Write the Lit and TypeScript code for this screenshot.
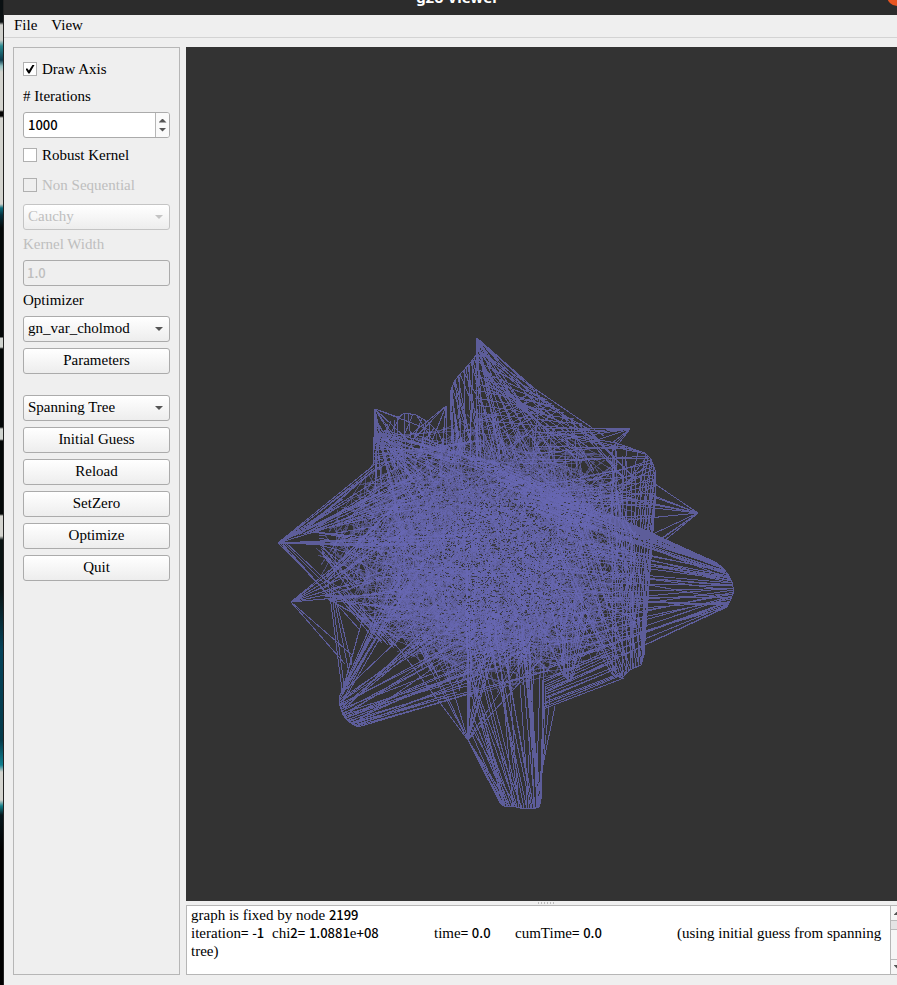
import { LitElement, html, css, svg } from "lit";
import { customElement } from "lit/decorators.js";

type Point = [number, number];

/** Small seeded generator, so the pose graph looks the same on every load. */
function createRandom(seed: number): () => number {
  let s = seed;
  return () => {
    s = (s + 0x6d2b79f5) | 0;
    let t = Math.imul(s ^ (s >>> 15), 1 | s);
    t = (t + Math.imul(t ^ (t >>> 7), 61 | t)) ^ t;
    return ((t ^ (t >>> 14)) >>> 0) / 4294967296;
  };
}

const rand = createRandom(2199);

/** Point at fraction t (0..1) along a polyline. */
function along(line: Point[], t: number): Point {
  if (line.length === 1) return line[0];
  const f = Math.min(t, 0.9999) * (line.length - 1);
  const i = Math.floor(f);
  const k = f - i;
  return [
    line[i][0] + (line[i + 1][0] - line[i][0]) * k,
    line[i][1] + (line[i + 1][1] - line[i][1]) * k,
  ];
}

function inside([x, y]: Point, poly: Point[]): boolean {
  let hit = false;
  for (let i = 0, j = poly.length - 1; i < poly.length; j = i++) {
    const [xi, yi] = poly[i];
    const [xj, yj] = poly[j];
    if (yi > y !== yj > y && x < ((xj - xi) * (y - yi)) / (yj - yi) + xi) hit = !hit;
  }
  return hit;
}

const segment = (a: Point, b: Point): string =>
  `M${Math.round(a[0])} ${Math.round(a[1])}L${Math.round(b[0])} ${Math.round(b[1])}`;

/** Edges running in order from one polyline to another, with some jitter. */
function fan(from: Point[], to: Point[], count: number, jitter = 0.12): string {
  let d = "";
  for (let i = 0; i < count; i++) {
    const t = count === 1 ? 0 : i / (count - 1);
    const edge = i === 0 || i === count - 1;
    const u = edge ? t : Math.max(0, Math.min(1, t + (rand() - 0.5) * jitter * 2));
    d += segment(along(from, t), along(to, u));
  }
  return d;
}

const outline = (line: Point[]): string => "M" + line.map((p) => p.join(" ")).join("L");

const CORE: Point[] = [
  [374, 434], [410, 432], [446, 430], [456, 410], [478, 400], [510, 408], [545, 424], [590, 440], [622, 456],
  [640, 490], [640, 545], [645, 600], [642, 650], [606, 662], [570, 672], [545, 678], [506, 694],
  [470, 698], [436, 676], [400, 660], [374, 634], [340, 604], [318, 580], [314, 545], [340, 505], [374, 468],
];

function chords(count: number, reach: number, cx: number, cy: number, rx: number, ry: number): string {
  let d = "";
  for (let n = 0; n < count; ) {
    const a: Point = [cx + (rand() * 2 - 1) * rx, cy + (rand() * 2 - 1) * ry];
    const angle = rand() * Math.PI * 2;
    const length = reach * (0.4 + rand() * 0.6);
    const b: Point = [a[0] + Math.cos(angle) * length, a[1] + Math.sin(angle) * length];
    if (!inside(a, CORE) || !inside(b, CORE)) continue;
    d += segment(a, b);
    n++;
  }
  return d;
}

const LOBE_TOP: Point[] = [[450, 400], [451, 390], [455, 380], [463, 371], [471, 362], [476, 355]];
const LOBE_RIGHT: Point[] = [[715, 562], [722, 567], [728, 574], [732, 582], [734, 591], [730, 601], [727, 607]];
const LOBE_NE: Point[] = [[616, 443], [645, 453], [651, 459], [655, 470], [656, 490], [652, 525]];
const LOBE_SE: Point[] = [[612, 674], [622, 678], [630, 670], [641, 665], [644, 655]];
const LOBE_SOUTH: Point[] = [[500, 803], [504, 806], [512, 806], [520, 808], [532, 809], [539, 807], [541, 799]];
const LOBE_SW: Point[] = [[343, 690], [339, 697], [340, 706], [343, 715], [349, 722], [358, 727]];
const LOBE_NW: Point[] = [[388, 424], [396, 417], [405, 413], [416, 415], [428, 422], [438, 432]];

const EDGES = [
  // northern spike
  fan([[477, 338]], [[476, 470], [500, 460], [520, 440], [540, 430]], 12),
  fan([[477, 338]], [[535, 391], [538, 402], [545, 415]], 3),
  fan([[478, 350]], [[560, 450], [590, 440], [604, 436]], 4),
  fan(LOBE_TOP, [[455, 470], [470, 440], [476, 450], [500, 460], [540, 450]], 16, 0.25),
  fan(LOBE_TOP, [[452, 440], [460, 460], [466, 450], [478, 460]], 9, 0.1),
  fan([[477, 345], [482, 370], [490, 390]], [[520, 470], [550, 450], [580, 460], [600, 440]], 11, 0.3),
  fan([[474, 360], [476, 420]], [[535, 391], [560, 410], [590, 430]], 9),
  fan([[535, 391], [548, 401], [565, 416], [587, 428]], [[480, 420], [510, 450], [590, 470], [636, 480]], 16, 0.3),
  outline([[477, 338], [535, 389], [539, 397], [548, 403], [567, 417], [587, 428], [630, 429]]),
  outline(LOBE_TOP),
  // north-east spike and rounded lobe
  fan([[630, 429]], [[540, 428], [530, 436], [560, 440], [615, 443], [606, 460]], 8),
  fan(LOBE_NE, [[555, 432], [520, 457], [530, 480], [540, 510], [580, 560]], 18, 0.25),
  fan(LOBE_NE, [[608, 560], [622, 610], [635, 630], [644, 650]], 14, 0.1),
  fan([[612, 446], [656, 490]], LOBE_SE, 10, 0.08),
  fan([[648, 455], [656, 500]], [[600, 520], [540, 500]], 7),
  outline(LOBE_NE),
  fan([[698, 513]], [[655, 484], [650, 500], [570, 490], [560, 520], [600, 545], [655, 539], [664, 541]], 12),
  // eastern lobe
  fan(LOBE_RIGHT, [[410, 432], [470, 460], [540, 520], [550, 560], [560, 610], [550, 660], [548, 690]], 32, 0.06),
  fan(LOBE_RIGHT, [[540, 487], [560, 510], [600, 560], [600, 590], [620, 638]], 22, 0.2),
  fan([[715, 562], [724, 569]], [[490, 460], [500, 485]], 7),
  outline(LOBE_RIGHT),
  // south-east lobe
  fan(LOBE_SE, [[545, 560], [560, 540], [580, 500], [612, 480], [646, 560]], 18, 0.15),
  fan([[544, 680], [546, 694], [543, 709]], [[610, 650], [616, 664], [624, 678]], 13, 0.08),
  fan([[563, 675], [568, 681], [573, 676]], [[530, 600], [560, 600], [600, 610]], 12, 0.2),
  outline(LOBE_SE),
  // southern spike
  fan(LOBE_SOUTH, [[467, 738], [469, 700], [475, 640], [500, 600], [520, 620], [544, 665]], 28, 0.16),
  fan(LOBE_SOUTH, [[468, 740], [480, 690], [505, 650], [530, 660], [544, 680]], 18, 0.35),
  fan([[541, 800], [541, 775]], [[543, 680], [555, 706]], 4),
  fan([[468, 740]], [[400, 650], [430, 640], [466, 560], [472, 560], [500, 620], [540, 660]], 20),
  outline(LOBE_SOUTH),
  outline([[467, 738], [476, 755], [500, 803]]),
  // south-west lobe
  fan(LOBE_SW, [[365, 610], [390, 620], [440, 640], [470, 670], [480, 680], [435, 704]], 24, 0.12),
  fan(LOBE_SW, [[400, 570], [430, 560], [480, 600], [520, 640], [550, 670]], 20, 0.3),
  fan([[358, 727]], [[434, 704], [442, 702], [480, 690]], 3),
  outline(LOBE_SW),
  // western spikes
  fan([[278, 543]], [[374, 465], [400, 460], [430, 480], [480, 538], [420, 545], [360, 546]], 18),
  fan([[280, 543]], [[374, 468], [330, 512], [350, 500]], 5),
  fan([[278, 543], [284, 541]], [[315, 580], [360, 630], [400, 650]], 5),
  fan([[297, 535], [318, 530], [322, 554]], [[374, 470], [420, 500], [440, 570], [350, 590]], 22, 0.25),
  fan([[291, 602]], [[360, 545], [380, 555], [345, 580], [331, 598], [370, 595]], 9),
  fan([[291, 602]], [[345, 664], [352, 655]], 2),
  fan([[326, 575], [322, 595], [333, 602]], [[400, 500], [430, 560], [400, 640]], 18, 0.25),
  fan([[328, 580], [336, 600]], [[342, 690], [352, 665]], 4),
  fan([[340, 598], [345, 590]], [[375, 640], [400, 650]], 6),
  // north-west spike
  fan([[375, 409]], [[373, 465], [378, 480], [390, 470], [404, 450], [430, 430]], 9),
  fan([[374, 409], [373, 465]], [[376, 490], [420, 480], [460, 460], [480, 440]], 15, 0.25),
  fan([[376, 418], [374, 440], [384, 430]], [[400, 520], [440, 480], [480, 470], [520, 470]], 16, 0.3),
  fan(LOBE_NW, [[380, 450], [396, 470], [420, 450], [446, 450]], 14, 0.3),
  fan([[446, 406]], [[392, 450], [408, 452], [440, 460], [446, 450]], 6),
  outline([[375, 409], [398, 417], ...LOBE_NW.slice(2)]),
].join("");

/** Several layers, so that crossings build up towards the middle. */
const MESH = [
  chords(420, 210, 480, 550, 170, 150),
  chords(560, 130, 490, 560, 160, 140),
  chords(420, 90, 470, 570, 110, 100),
  chords(520, 70, 490, 560, 95, 90),
  chords(380, 50, 480, 570, 80, 75),
];

function speckles(count: number, cx: number, cy: number, rx: number, ry: number): string {
  let d = "";
  for (let i = 0; i < count; i++) {
    const angle = rand() * Math.PI * 2;
    const r = Math.sqrt(rand());
    const x = Math.round(cx + Math.cos(angle) * r * rx);
    const y = Math.round(cy + Math.sin(angle) * r * ry);
    const w = rand() > 0.7 ? 2 : 1;
    d += `M${x} ${y}h${w}v1h-${w}z`;
  }
  return d;
}

const GAPS = speckles(650, 505, 560, 66, 62) + speckles(900, 485, 560, 120, 100);

/** Figures and signs are set in the sans face, words in the serif one. */
const mixed = (text: string) =>
  text
    .split(/([0-9=+.\-]+)/)
    .map((part, i) => (i % 2 ? html`<span class="num">${part}</span>` : part));

@customElement("graph-view")
export class GraphView extends LitElement {
  static styles = css`
    :host { display: block; background: #333; overflow: hidden; }
    svg { display: block; width: 100%; height: 100%; }
    .edges { fill: none; stroke: #6868b4; stroke-opacity: 0.8; shape-rendering: crispEdges; }
    .mesh { fill: none; stroke: #6868b4; stroke-opacity: 0.55; shape-rendering: crispEdges; }
    .gaps { fill: #333; fill-opacity: 0.85; shape-rendering: crispEdges; }
  `;

  render() {
    return html`<svg viewBox="186 47 711 854" preserveAspectRatio="xMinYMid meet" role="img" aria-label="Pose graph">
      ${svg`<path class="edges" d=${EDGES}></path>
      ${MESH.map((layer) => svg`<path class="mesh" d=${layer}></path>`)}
      <path class="gaps" d=${GAPS}></path>`}
    </svg>`;
  }
}

@customElement("app-root")
export class AppRoot extends LitElement {
  static styles = css`
    * { box-sizing: border-box; }
    :host {
      display: block;
      height: 100vh;
      min-height: 640px;
      overflow: hidden;
      font: 15px/18px "Liberation Serif", serif;
      color: #000;
      background: linear-gradient(
        #0a1012 0 22px, #cfd0cc 25px 40px, #2a8a90 46px, #0b3a4c 60px, #8fc0c0 66px, #d4d4cf 72px 110px,
        #050505 112px 116px, #d4d4cf 118px 204px, #0c6c7c 208px, #05303e 215px, #040808 228px 337px,
        #d0d4d0 338px 347px, #040808 349px 427px, #d0d4d0 429px 439px, #040808 441px 514px,
        #d4d4cf 516px 536px, #0a1414 540px 590px, #04435a 650px, #043a4a 740px, #108090 765px,
        #d4d4cf 772px 800px, #12808a 806px, #06161c 815px, #000 850px
      );
    }
    .window {
      display: flex;
      flex-direction: column;
      height: 100%;
      margin: 0 -14px 0 3px;
      border-left: 1px solid #222;
      background: #efefef;
    }
    .title {
      position: relative;
      display: flex;
      flex: none;
      align-items: flex-end;
      justify-content: center;
      height: 15px;
      padding-bottom: 9px;
      background: #2c2c2c;
      color: #fff;
    }
    .title h1 { margin: 0; font: bold 15px/18px "Noto Sans", sans-serif; }
    .close {
      position: absolute;
      right: 4px;
      bottom: 9px;
      width: 20px;
      height: 20px;
      padding: 0;
      border: 0;
      border-radius: 50%;
      background: #e95420;
    }
    .menu {
      display: flex;
      flex: none;
      gap: 14px;
      height: 23px;
      padding: 0 10px;
      border-bottom: 1px solid #d3d3d3;
    }
    .menu button { padding: 0 0 2px; border: 0; background: none; font: inherit; color: inherit; }
    .body { display: flex; flex: 1; gap: 6px; min-height: 0; padding: 9px 6px 10px 9px; }
    .panel {
      display: flex;
      flex: none;
      flex-direction: column;
      gap: 6px;
      width: 167px;
      padding: 10px 9px;
      border: 1px solid #b6b6b6;
    }
    .caption { height: 18px; line-height: 16px; }
    .check { display: flex; align-items: center; gap: 5px; height: 24px; padding-bottom: 2px; }
    .check input {
      appearance: none;
      display: grid;
      place-items: center;
      width: 14px;
      height: 14px;
      margin: 0;
      border: 1px solid #b0b0b0;
      background: #fff;
    }
    .check input:checked::after {
      content: "";
      width: 9px;
      height: 9px;
      background: #000;
      clip-path: polygon(0 50%, 18% 42%, 38% 68%, 80% 0, 100% 6%, 46% 100%, 32% 100%);
    }
    .check input:disabled { background: #efefef; }
    .off { color: #bebebe; }
    .field, .push, select {
      width: 100%;
      height: 26px;
      border: 1px solid #ababab;
      border-radius: 3px;
      color: inherit;
    }
    .push, select {
      flex: none;
      margin: 0;
      background: linear-gradient(#fff, #ededed);
      font: inherit;
    }
    .push { padding: 0 0 2px; }
    select { appearance: none; padding: 0 4px 2px; opacity: 1; }
    .combo { position: relative; flex: none; height: 26px; }
    .combo::after {
      content: "";
      position: absolute;
      top: 11px;
      right: 7px;
      border: 4px solid transparent;
      border-top-color: #555;
      border-bottom: 0;
      pointer-events: none;
    }
    .combo.off::after { border-top-color: #c4c4c4; }
    .combo.off select { border-color: #c4c4c4; }
    .num, .field input { font-family: "Noto Sans CJK SC", sans-serif; font-size: 13px; font-weight: 500; line-height: 1; }
    .field { display: flex; flex: none; overflow: hidden; background: #fff; }
    .field.off { background: #efefef; }
    .field input {
      appearance: textfield;
      flex: 1;
      min-width: 0;
      padding: 0 4px 2px;
      border: 0;
      outline: 0;
      background: none;
      color: inherit;
    }
    .field input::-webkit-inner-spin-button { appearance: none; }
    .field.off input { padding: 0 3px 2px; color: #bebebe; }
    .steps { display: flex; flex-direction: column; justify-content: center; gap: 5px; width: 14px; border-left: 1px solid #b6b6b6; background: #fafafa; }
    .arrow { align-self: center; width: 8px; height: 4px; padding: 0; border: 0; background: #555; }
    .up { clip-path: polygon(50% 0, 100% 100%, 0 100%); }
    .down { clip-path: polygon(0 0, 100% 0, 50% 100%); }
    .spacer { flex: none; height: 9px; }
    .main { display: flex; flex: 1; flex-direction: column; min-width: 0; }
    graph-view { flex: 1; min-height: 0; }
    .grip { align-self: center; width: 17px; height: 4px; padding: 0; border: 0; background: radial-gradient(circle, #bbb 1px, transparent 1px) 0 0 / 3px 4px; }
    .log { display: flex; flex: none; height: 70px; border: 1px solid #b6b6b6; background: #fff; }
    .text { flex: 1; margin: 0; padding: 0 4px; font: inherit; white-space: pre-wrap; tab-size: 81px; }
    .scroll { display: flex; flex: none; flex-direction: column; align-items: center; width: 14px; border-left: 1px solid #b6b6b6; background: #f6f6f6; }
    .scroll .arrow { margin: 5px 0; }
    .thumb { width: 100%; height: 10px; border: 1px solid #bbb; border-width: 1px 0; background: #e4e4e4; }
    .track { flex: 1; width: 100%; border-bottom: 1px solid #bbb; }
  `;

  render() {
    return html`
      <div class="window">
        <header class="title">
          <h1>g2o Viewer</h1>
          <button class="close" aria-label="Close"></button>
        </header>
        <nav class="menu"><button>File</button><button>View</button></nav>
        <div class="body">
          <form class="panel" @submit=${(e: Event) => e.preventDefault()}>
            <label class="check"><input type="checkbox" checked />Draw Axis</label>
            <label class="caption" for="iterations"># Iterations</label>
            <div class="field">
              <input id="iterations" type="number" value="1000" />
              <div class="steps">
                <button type="button" class="arrow up" aria-label="Increase"></button>
                <button type="button" class="arrow down" aria-label="Decrease"></button>
              </div>
            </div>
            <label class="check"><input type="checkbox" />Robust Kernel</label>
            <label class="check off"><input type="checkbox" disabled />Non Sequential</label>
            <div class="combo off">
              <select aria-label="Kernel" disabled><option>Cauchy</option></select>
            </div>
            <label class="caption off" for="width">Kernel Width</label>
            <div class="field off"><input id="width" type="text" value="1.0" disabled /></div>
            <label class="caption" for="optimizer">Optimizer</label>
            <div class="combo"><select id="optimizer"><option>gn_var_cholmod</option></select></div>
            <button type="button" class="push">Parameters</button>
            <div class="spacer"></div>
            <div class="combo"><select aria-label="Guess method"><option>Spanning Tree</option></select></div>
            ${["Initial Guess", "Reload", "SetZero", "Optimize", "Quit"].map(
              (name) => html`<button type="button" class="push">${name}</button>`,
            )}
          </form>
          <main class="main">
            <graph-view></graph-view>
            <button class="grip" aria-label="Resize log"></button>
            <section class="log" aria-label="Log">
              <p class="text">${mixed(
                "graph is fixed by node 2199\niteration= -1\tchi2= 1.0881e+08\ttime= 0.0\tcumTime= 0.0\t(using initial guess from spanning tree)",
              )}</p>
              <div class="scroll">
                <button class="arrow up" aria-label="Scroll up"></button>
                <div class="thumb"></div>
                <div class="track"></div>
                <button class="arrow down" aria-label="Scroll down"></button>
              </div>
            </section>
          </main>
        </div>
      </div>
    `;
  }
}
